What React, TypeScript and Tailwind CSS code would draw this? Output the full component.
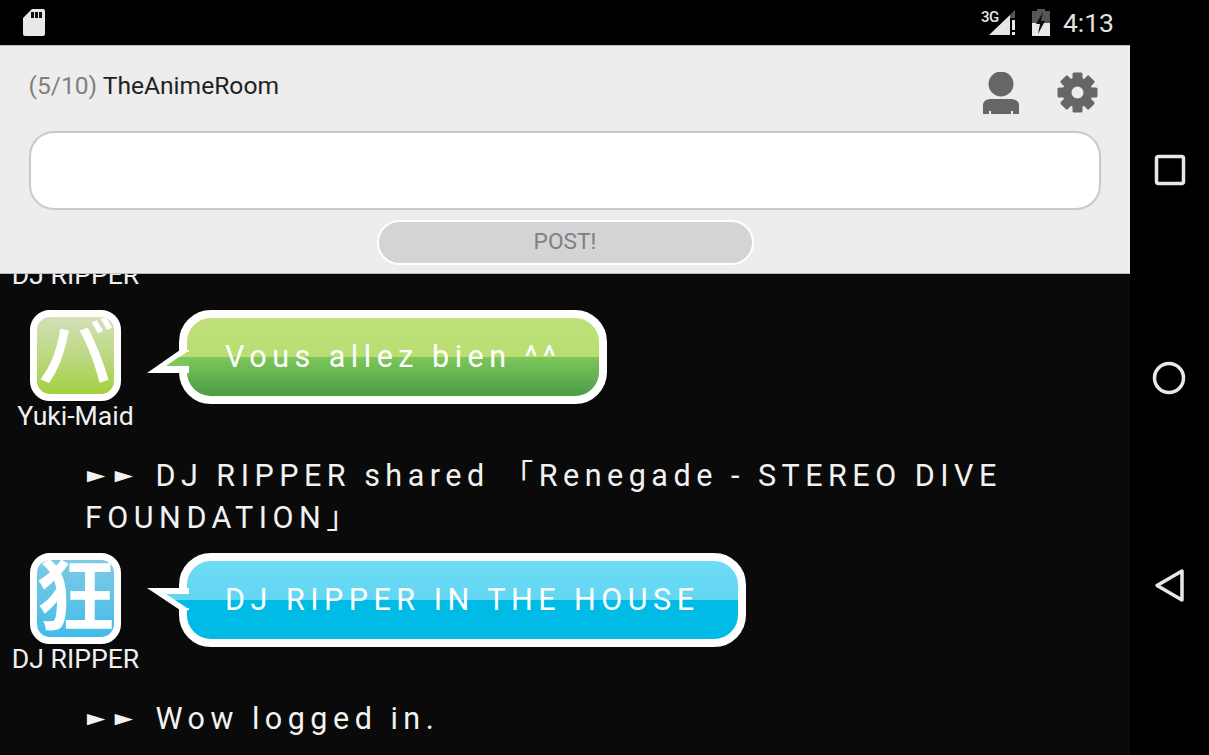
import type { ReactNode } from "react";

const font = { fontFamily: "Roboto, 'Noto Sans CJK JP', sans-serif" };

function StatusBar() {
  return (
    <div className="h-[45px] bg-black flex items-center pl-[23px] pr-[16px] shrink-0">
      {/* sd card */}
      <svg width="22" height="27" viewBox="0 0 22 27" className="-mt-[1px]">
        <path d="M9 0h11a2 2 0 0 1 2 2v23a2 2 0 0 1-2 2H2a2 2 0 0 1-2-2V9z" fill="#e8e8e8" />
        <rect x="8" y="3" width="3" height="6" fill="#111" />
        <rect x="12" y="3" width="3" height="6" fill="#111" />
        <rect x="16" y="3" width="3" height="6" fill="#111" />
      </svg>
      <div className="flex-1" />
      <div className="relative w-[36px] h-[30px] mr-[15px]">
        <svg width="36" height="30" viewBox="0 0 36 30" className="absolute left-0 top-0">
          <path d="M8 27L29 7v20z" fill="#e6e6e6" />
          <path d="M29 7l5-5v8h-5z" fill="#555" />
          <rect x="31" y="12" width="3" height="10" fill="#e6e6e6" />
          <rect x="31" y="24" width="3" height="3" fill="#e6e6e6" />
        </svg>
        <span className="absolute left-0 -top-[1px] text-[15px] font-medium leading-[20px] text-[#e6e6e6] tracking-[-0.5px]">3G</span>
      </div>
      <svg width="18" height="27" viewBox="0 0 18 27" className="mr-[13px]">
        <path d="M5 2V0h8v2h5v25H0V2z" fill="#555" />
        <path d="M0 14h18v13H0z" fill="#e8e8e8" />
        <path d="M11 3L4 15h4l-2 10 7-13H9z" fill="#111" />
      </svg>
      <span className="text-[26.500px] leading-none text-[#e2e2e2] mt-[1px]">4:13</span>
    </div>
  );
}

const gearTeeth = [0, 45, 90, 135, 180, 225, 270, 315];

function Header() {
  return (
    <div className="h-[229px] shrink-0 bg-[#ededed] border-t border-b border-t-[#bdbdbd] border-b-[#bdbdbd] px-[29px] flex flex-col relative z-10">
      <div className="flex items-start justify-between h-[85px]">
        <div className="text-[24.600px] leading-[30px] mt-[25px] -ml-[0.500px]">
          <span className="text-[#808080]">(5/10) </span>
          <span className="text-[#222]">TheAnimeRoom</span>
        </div>
        <div className="flex items-start gap-[38px] mt-[26px] pr-[3px]">
          <svg width="36" height="42" viewBox="0 0 36 42">
            <circle cx="18" cy="12" r="12.500" fill="#666" />
            <path d="M0 42V33c0-4 4-6 8-6h20c4 0 8 2 8 6v9h-6v-3h-2v3H8v-3H6v3z" fill="#666" />
          </svg>
          <svg width="41" height="41" viewBox="0 0 41 41" fill="none">
            {gearTeeth.map((a) => (
              <rect key={a} x="15.500" y="0.500" width="10" height="9" rx="1.500" fill="#666" transform={`rotate(${a} 20.500 20.500)`} />
            ))}
            <circle cx="20.500" cy="20.500" r="10.500" stroke="#666" strokeWidth="9" />
          </svg>
        </div>
      </div>
      <div className="h-[79px] bg-white border-2 border-[#c9c9c9] rounded-[25px]" />
      <div className="flex justify-center mt-[10px]">
        <button className="w-[377px] h-[45px] rounded-full bg-[#d3d4d6] border-2 border-white text-[22.700px] text-[#808080]">
          POST!
        </button>
      </div>
    </div>
  );
}

function Avatar({ glyph, gradient, name, weight }: { glyph: string; gradient: string; name: string; weight: string }) {
  return (
    <div className="w-[151px] shrink-0 flex flex-col items-center">
      <div className={`w-[91px] h-[91px] rounded-[20px] border-[7px] border-white overflow-hidden flex items-center justify-center ${gradient}`}>
        <span className={`text-[78px] leading-none text-white ${weight}`}>{glyph}</span>
      </div>
      <div className="text-[26.600px] leading-[30px] text-[#f0f0f0]">{name}</div>
    </div>
  );
}

function Bubble({ children, gradient, tail }: { children: ReactNode; gradient: string; tail: ReactNode }) {
  return (
    <div className="relative ml-[28px]">
      {tail}
      <div className={`h-[94px] rounded-[32px] border-[8px] border-white pl-[38px] pr-[38px] flex items-center text-[30.500px] tracking-[5.500px] text-white ${gradient}`}>
        {children}
      </div>
    </div>
  );
}

function SystemLine({ children }: { children: ReactNode }) {
  return (
    <div className="pl-[85px] pr-[120px] text-[30.500px] leading-[42px] tracking-[5.500px] text-[#f2f2f2]">
      <span className="inline-block -ml-[4px] mr-[6px] scale-y-[0.62] tracking-[-2.500px]">►►</span> {children}
    </div>
  );
}

export default function App() {
  return (
    <div className="w-[1209px] h-[755px] overflow-hidden flex bg-black" style={font}>
      <div className="w-[1130px] flex flex-col">
        <StatusBar />
        <Header />
        <div className="flex-1 overflow-hidden bg-[#0a0a0a]">
          {/* name of the message scrolled under the header */}
          <div className="-mt-[14px] w-[151px] text-center text-[26.600px] leading-[30px] text-[#f0f0f0]">DJ RIPPER</div>
          <div className="flex mt-[20px]">
            <Avatar
              glyph="バ"
              name="Yuki-Maid"
              weight="font-medium"
              gradient="bg-gradient-to-b from-[#d4e0b8] to-[#a4d03c]"
            />
            <Bubble
              gradient="bg-[linear-gradient(to_bottom,#bfe07a_0%,#b9de72_50%,#7dc75a_50%,#4c9c46_100%)]"
              tail={
                <svg width="42" height="36" viewBox="0 0 42 36" className="absolute -left-[32px] top-[35px] z-10">
                  <path d="M0 28L33 5h9v23H33z" fill="#fff" />
                  <path d="M19 21L40 7h2v5H32z" fill="#b9de72" />
                  <path d="M32 12h10v9H19z" fill="#7dc75a" />
                </svg>
              }
            >
              Vous allez bien ^^
            </Bubble>
          </div>
          <div className="mt-[24px]">
            <SystemLine>DJ RIPPER shared 「Renegade - STEREO DIVE FOUNDATION」</SystemLine>
          </div>
          <div className="flex mt-[14px]">
            <Avatar
              glyph="狂"
              name="DJ RIPPER"
              weight="font-bold"
              gradient="bg-gradient-to-b from-[#7ccbe4] to-[#40bbea]"
            />
            <Bubble
              gradient="bg-[linear-gradient(to_bottom,#6edcf6_0%,#62d6f2_50%,#00bbe6_50%,#00bbe6_100%)]"
              tail={
                <svg width="42" height="36" viewBox="0 0 42 36" className="absolute -left-[32px] top-[32px] z-10">
                  <path d="M0 3H42V25H33z" fill="#fff" />
                  <path d="M19 9H42V15H28z" fill="#62d6f2" />
                  <path d="M28 15H42V23H40z" fill="#00bbe6" />
                </svg>
              }
            >
              DJ RIPPER IN THE HOUSE
            </Bubble>
          </div>
          <div className="mt-[24px]">
            <SystemLine>Wow logged in.</SystemLine>
          </div>
        </div>
      </div>
      {/* android nav bar */}
      <div className="w-[79px] relative">
        <svg width="79" height="755" viewBox="0 0 79 755" fill="none" stroke="#e8e8e8" strokeWidth="3.500" strokeLinejoin="round">
          <rect x="26.500" y="156.500" width="27" height="27" rx="2" />
          <circle cx="39" cy="378" r="14.500" />
          <path d="M27 585.500L52 571v29z" />
        </svg>
      </div>
    </div>
  );
}
